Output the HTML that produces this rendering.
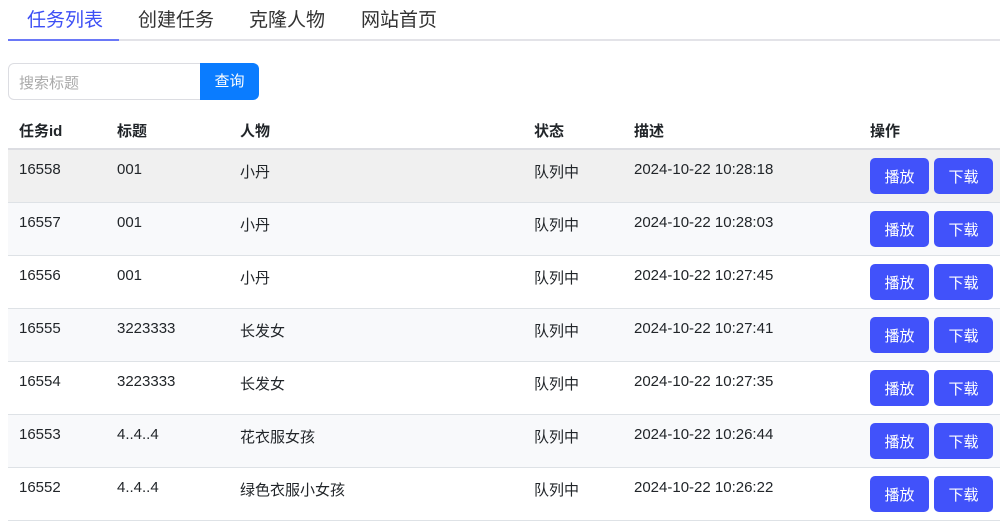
<!DOCTYPE html>
<html><head><meta charset="utf-8"><style>
*{box-sizing:border-box;margin:0;padding:0}
body{width:1000px;height:520px;overflow:hidden;background:#fff;font-family:"Liberation Sans","Noto Sans CJK SC",sans-serif;color:#212529;font-size:14px}
.tabs{position:absolute;left:8px;top:0;width:992px;height:41px;border-bottom:2px solid #e3e3e8}
.tab{position:absolute;top:5px;font-size:19px;color:#333}
.tab.a{color:#3d4ff5}
.ul{position:absolute;left:0;bottom:-2px;width:111px;height:2px;background:#6a78f7}
.inp{position:absolute;left:8px;top:63px;width:193px;height:37px;border:1px solid #dcdde2;border-radius:6px 0 0 6px;color:#aaa;font-size:15px;padding:8px 10px}
.btn{position:absolute;left:200px;top:63px;width:59px;height:37px;background:#0a7cff;border-radius:0 6px 6px 0;color:#fff;font-size:15px;text-align:center;line-height:38px}
.th{position:absolute;top:120px;font-weight:bold;font-size:15px}
.hb{position:absolute;left:8px;top:148px;width:992px;height:2px;background:#dcdde2}
.row{position:absolute;left:8px;width:992px;height:53px;border-bottom:1px solid #dee2e6}
.row span{position:absolute;top:11px;font-size:15px}
.b{position:absolute;top:8px;width:59px;height:36px;background:#4152fa;border-radius:5px;color:#fff;font-size:15px;text-align:center;line-height:39px}
</style></head><body>
<div class="tabs">
<div class="tab a" style="left:19px">任务列表</div>
<div class="tab" style="left:130px">创建任务</div>
<div class="tab" style="left:241px">克隆人物</div>
<div class="tab" style="left:353px">网站首页</div>
<div class="ul"></div>
</div>
<div class="inp">搜索标题</div><div class="btn">查询</div>
<div class="th" style="left:19px">任务id</div>
<div class="th" style="left:117px">标题</div>
<div class="th" style="left:240px">人物</div>
<div class="th" style="left:534px">状态</div>
<div class="th" style="left:634px">描述</div>
<div class="th" style="left:870px">操作</div>
<div class="hb"></div>

<div class="row" style="top:150px;background:#f0f0f0"><span style="left:11px">16558</span><span style="left:109px">001</span><span style="left:232px">小丹</span><span style="left:526px">队列中</span><span style="left:626px">2024-10-22 10:28:18</span><div class="b" style="left:862px">播放</div><div class="b" style="left:926px">下载</div></div>
<div class="row" style="top:203px;background:#f8f9fb"><span style="left:11px">16557</span><span style="left:109px">001</span><span style="left:232px">小丹</span><span style="left:526px">队列中</span><span style="left:626px">2024-10-22 10:28:03</span><div class="b" style="left:862px">播放</div><div class="b" style="left:926px">下载</div></div>
<div class="row" style="top:256px"><span style="left:11px">16556</span><span style="left:109px">001</span><span style="left:232px">小丹</span><span style="left:526px">队列中</span><span style="left:626px">2024-10-22 10:27:45</span><div class="b" style="left:862px">播放</div><div class="b" style="left:926px">下载</div></div>
<div class="row" style="top:309px;background:#f8f9fb"><span style="left:11px">16555</span><span style="left:109px">3223333</span><span style="left:232px">长发女</span><span style="left:526px">队列中</span><span style="left:626px">2024-10-22 10:27:41</span><div class="b" style="left:862px">播放</div><div class="b" style="left:926px">下载</div></div>
<div class="row" style="top:362px"><span style="left:11px">16554</span><span style="left:109px">3223333</span><span style="left:232px">长发女</span><span style="left:526px">队列中</span><span style="left:626px">2024-10-22 10:27:35</span><div class="b" style="left:862px">播放</div><div class="b" style="left:926px">下载</div></div>
<div class="row" style="top:415px;background:#f8f9fb"><span style="left:11px">16553</span><span style="left:109px">4..4..4</span><span style="left:232px">花衣服女孩</span><span style="left:526px">队列中</span><span style="left:626px">2024-10-22 10:26:44</span><div class="b" style="left:862px">播放</div><div class="b" style="left:926px">下载</div></div>
<div class="row" style="top:468px"><span style="left:11px">16552</span><span style="left:109px">4..4..4</span><span style="left:232px">绿色衣服小女孩</span><span style="left:526px">队列中</span><span style="left:626px">2024-10-22 10:26:22</span><div class="b" style="left:862px">播放</div><div class="b" style="left:926px">下载</div></div>
</body></html>
